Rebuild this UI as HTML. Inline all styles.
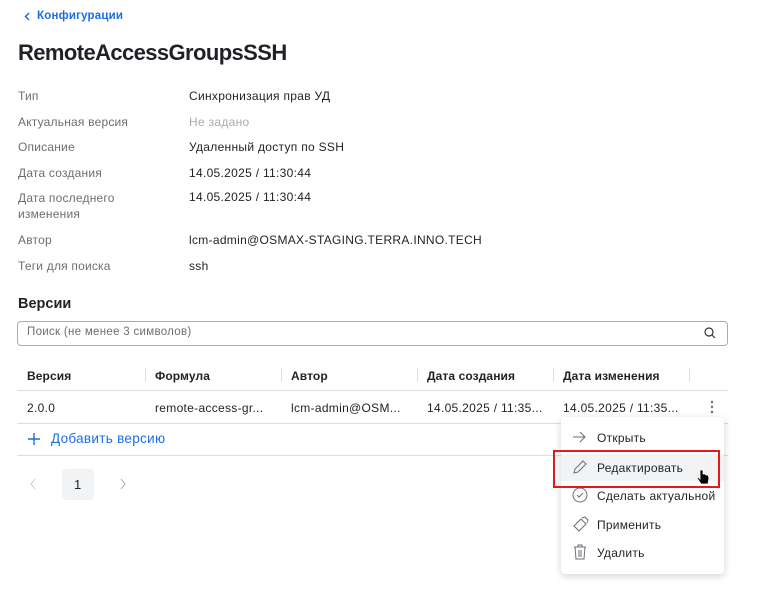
<!DOCTYPE html>
<html><head><meta charset="utf-8"><style>
*{margin:0;padding:0;box-sizing:border-box}
body{width:770px;height:608px;background:#fff;font-family:"Liberation Sans",sans-serif;color:#1f2126;position:relative;overflow:hidden;font-size:12px;letter-spacing:0.3px}
.a{position:absolute;white-space:nowrap}
.lbl{color:#6b6e75;letter-spacing:0.2px}
.hl{position:absolute;height:1px;background:#dcdde0}
.vs{position:absolute;width:1px;height:14px;background:#dcdde0;top:368px}
.th{font-weight:bold;top:369px;letter-spacing:0.1px}
.mi{position:absolute;left:561px;width:163px;height:27px}
.mi span{position:absolute;left:36px;top:7px;font-size:12px;letter-spacing:0.25px;color:#1f2126}
.mi svg{position:absolute;left:11px;top:5px}
</style></head><body>
<svg class="a" style="left:24px;top:12px" width="6" height="9"><path d="M5 1L1.5 4.5 5 8" fill="none" stroke="#1a6fe0" stroke-width="1.5"/></svg>
<div class="a" style="left:37px;top:10px;color:#1a6fe0;font-size:11.5px;font-weight:bold;letter-spacing:0.2px">Конфигурации</div>
<div class="a" style="left:18px;top:40px;font-size:22px;font-weight:bold;letter-spacing:-0.6px">RemoteAccessGroupsSSH</div>

<div class="a lbl" style="left:18px;top:89px">Тип</div><div class="a" style="left:189px;top:89px">Синхронизация прав УД</div>
<div class="a lbl" style="left:18px;top:115px">Актуальная версия</div><div class="a" style="left:189px;top:115px;color:#a8abb0">Не задано</div>
<div class="a lbl" style="left:18px;top:140px">Описание</div><div class="a" style="left:189px;top:140px">Удаленный доступ по SSH</div>
<div class="a lbl" style="left:18px;top:166px">Дата создания</div><div class="a" style="left:189px;top:166px">14.05.2025 / 11:30:44</div>
<div class="a lbl" style="left:18px;top:190px;line-height:16px">Дата последнего<br>изменения</div><div class="a" style="left:189px;top:190px">14.05.2025 / 11:30:44</div>
<div class="a lbl" style="left:18px;top:233px">Автор</div><div class="a" style="left:189px;top:233px">lcm-admin@OSMAX-STAGING.TERRA.INNO.TECH</div>
<div class="a lbl" style="left:18px;top:259px">Теги для поиска</div><div class="a" style="left:189px;top:259px">ssh</div>

<div class="a" style="left:18px;top:296px;font-size:14.5px;font-weight:bold;letter-spacing:0">Версии</div>
<div style="position:absolute;left:17px;top:321px;width:711px;height:25px;border:1px solid #a8abb0;border-radius:4px"></div>
<div class="a" style="left:27px;top:326px;color:#6b6e75;font-size:11.5px">Поиск (не менее 3 символов)</div>
<svg class="a" style="left:704px;top:327px" width="12" height="12" viewBox="0 0 12 12"><circle cx="5" cy="5" r="4" fill="none" stroke="#333" stroke-width="1.2"/><path d="M8 8l3 3" stroke="#333" stroke-width="1.2"/></svg>

<div class="a th" style="left:27px">Версия</div>
<div class="vs" style="left:145px"></div><div class="a th" style="left:155px">Формула</div>
<div class="vs" style="left:281px"></div><div class="a th" style="left:291px">Автор</div>
<div class="vs" style="left:417px"></div><div class="a th" style="left:427px">Дата создания</div>
<div class="vs" style="left:553px"></div><div class="a th" style="left:563px">Дата изменения</div>
<div class="vs" style="left:689px"></div>
<div class="hl" style="left:17px;width:711px;top:390px"></div>
<div class="a" style="left:27px;top:401px">2.0.0</div>
<div class="a" style="left:155px;top:401px">remote-access-gr...</div>
<div class="a" style="left:291px;top:401px">lcm-admin@OSM...</div>
<div class="a" style="left:427px;top:401px">14.05.2025 / 11:35...</div>
<div class="a" style="left:563px;top:401px">14.05.2025 / 11:35...</div>
<svg class="a" style="left:710px;top:400px" width="4" height="14"><circle cx="2" cy="2" r="1.2" fill="#6b6e75"/><circle cx="2" cy="7" r="1.2" fill="#6b6e75"/><circle cx="2" cy="12" r="1.2" fill="#6b6e75"/></svg>
<div class="hl" style="left:17px;width:711px;top:423px"></div>
<svg class="a" style="left:28px;top:433px" width="12" height="12"><path d="M6 0v12M0 6h12" stroke="#1a6fe0" stroke-width="1.4"/></svg>
<div class="a" style="left:51px;top:431px;color:#1a6fe0;font-size:13.5px;letter-spacing:0.3px">Добавить версию</div>
<div class="hl" style="left:17px;width:711px;top:455px"></div>

<svg class="a" style="left:29px;top:478px" width="8" height="12"><path d="M6 1L2 6l4 5" fill="none" stroke="#c4c6ca" stroke-width="1"/></svg>
<div style="position:absolute;left:62px;top:469px;width:32px;height:31px;background:#f2f3f5;border-radius:4px"></div>
<div class="a" style="left:74px;top:477px;font-size:13px">1</div>
<svg class="a" style="left:119px;top:478px" width="8" height="12"><path d="M2 1l4 5-4 5" fill="none" stroke="#a8abb0" stroke-width="1"/></svg>

<div style="position:absolute;left:561px;top:417px;width:163px;height:157px;background:#fff;border-radius:4px;box-shadow:0 2px 8px rgba(0,0,0,0.18)"></div>
<div class="mi" style="top:424px"><svg width="14" height="16"><path d="M1 8h12M8 3l5 5-5 5" fill="none" stroke="#6b6e75" stroke-width="1"/></svg><span>Открыть</span></div>
<div class="mi" style="top:454px;background:#f2f3f5"><svg width="16" height="16"><path d="M2 14l1-4 8-8 3 3-8 8z" fill="none" stroke="#6b6e75" stroke-width="1"/></svg><span>Редактировать</span></div>
<div class="mi" style="top:482px"><svg width="16" height="16"><circle cx="8" cy="8" r="7" fill="none" stroke="#6b6e75" stroke-width="1"/><path d="M5 8l2 2 4-4" fill="none" stroke="#6b6e75" stroke-width="1"/></svg><span>Сделать актуальной</span></div>
<div class="mi" style="top:511px"><svg width="18" height="16"><path d="M2 10l7-7 5 5-7 7zM10 2l3-1 3 3-1 3" fill="none" stroke="#6b6e75" stroke-width="1"/></svg><span>Применить</span></div>
<div class="mi" style="top:539px"><svg width="16" height="16"><path d="M2 3h12M6 3V1h4v2M3 3l1 12h8l1-12M7 6v7M9 6v7" fill="none" stroke="#6b6e75" stroke-width="1"/></svg><span>Удалить</span></div>
<div style="position:absolute;left:553px;top:450px;width:167px;height:38px;border:2px solid #e01b1b"></div>
<svg class="a" style="left:696px;top:468px" width="14" height="18"><path d="M4 2v9l-2-2-1 1 4 6h7l1-6-1-3-2 0-1-1-2 0V2z" fill="#000" stroke="#fff" stroke-width="0.8"/></svg>
</body></html>
